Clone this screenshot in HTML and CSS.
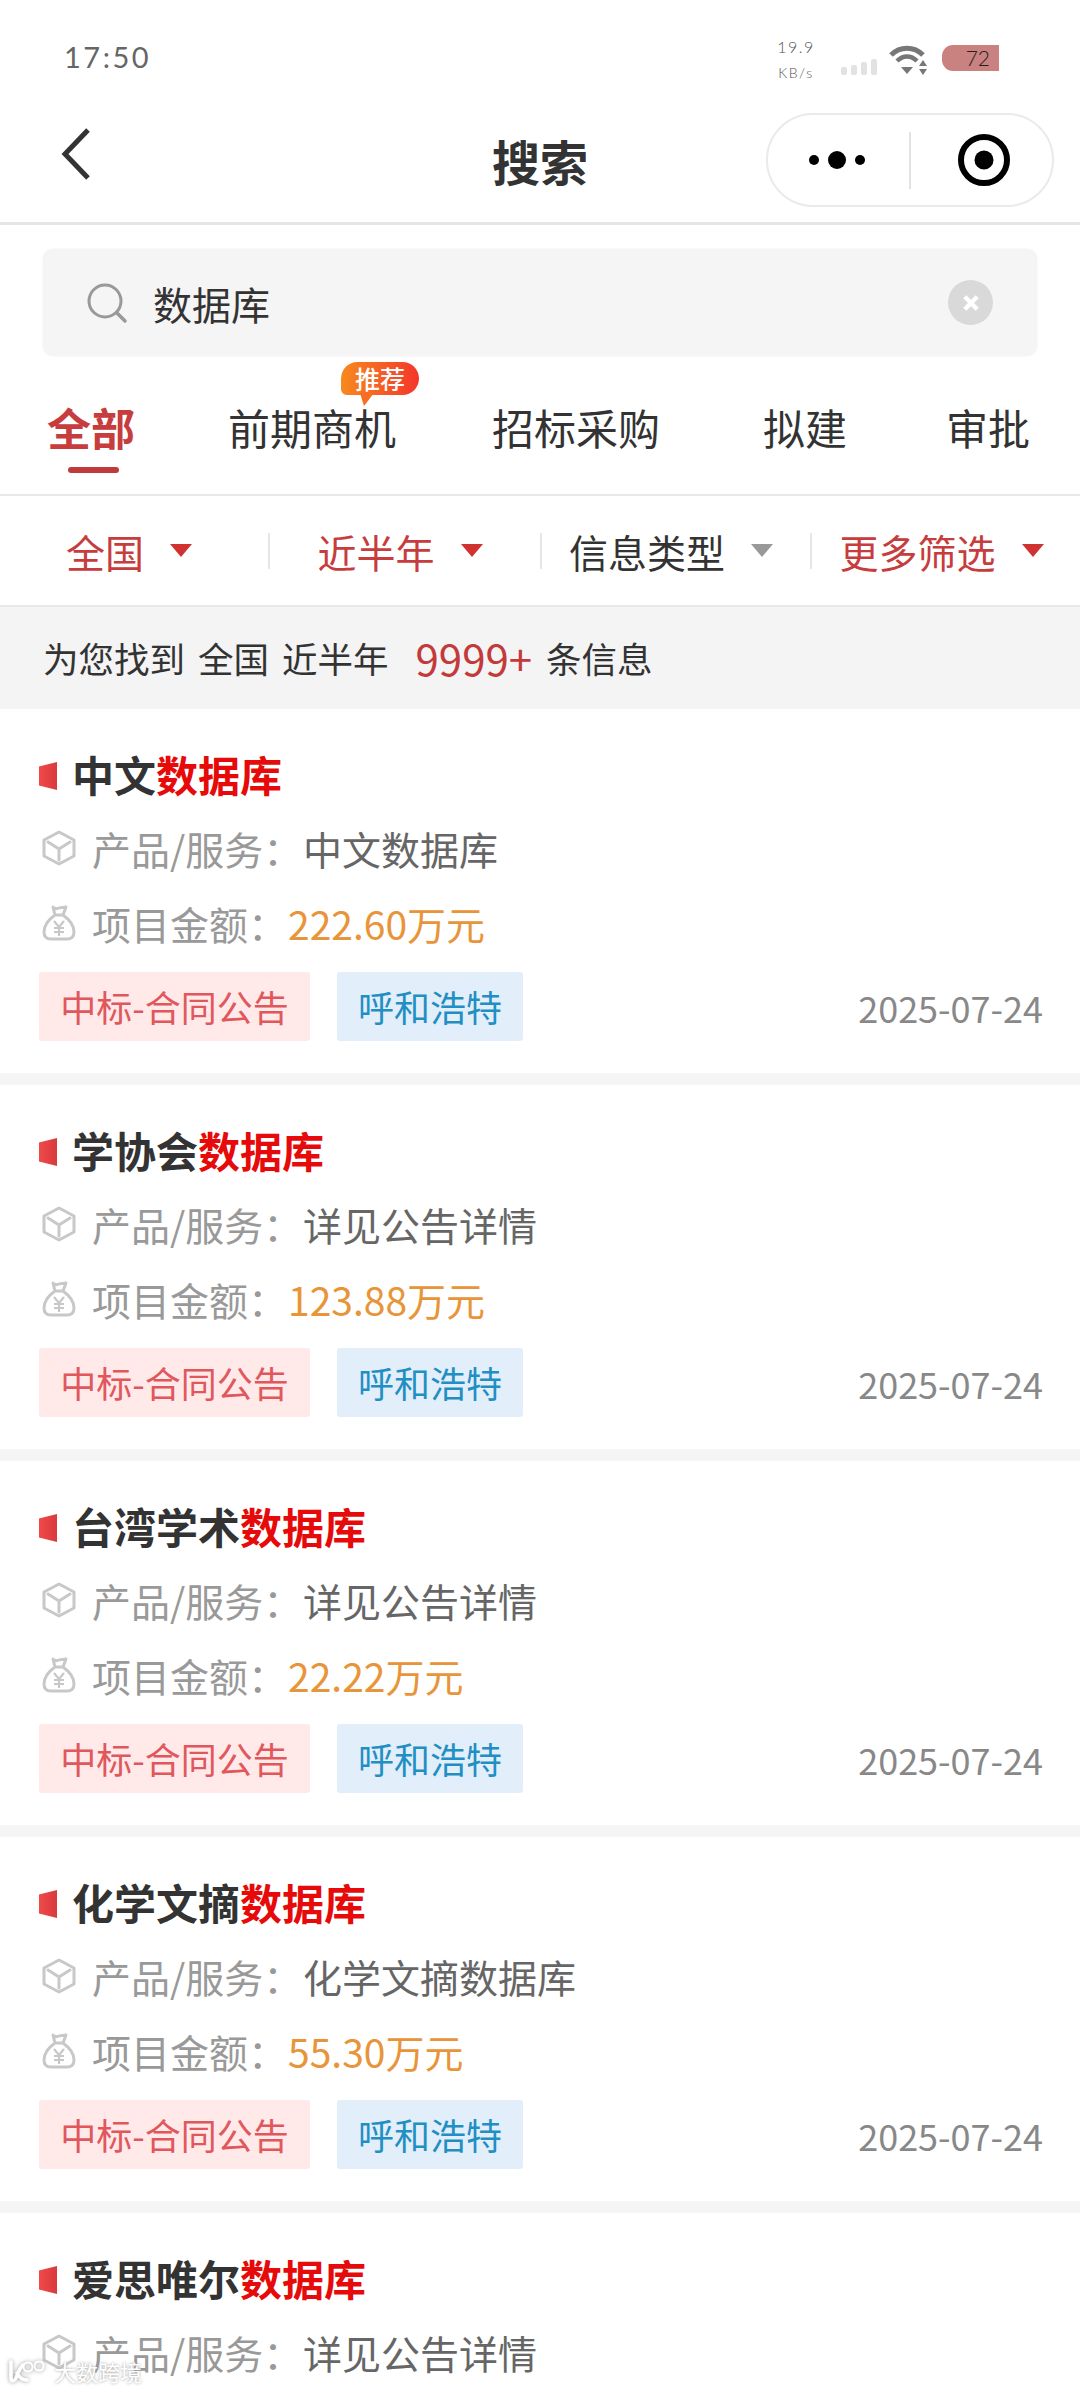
FILE: index.html
```html
<!DOCTYPE html>
<html lang="zh-CN">
<head>
<meta charset="utf-8">
<title>搜索</title>
<link rel="stylesheet" href="styles.css">
</head>
<body>
<div class="page">
  <header class="status">
    <span class="time">17:50</span>
    <div class="status-right">
      <div class="speed"><span>19.9</span><span class="unit">KB/s</span></div>
      <svg class="signal" width="36" height="18" viewBox="0 0 36 18"><rect x="0" y="9" width="6" height="8" rx="2"/><rect x="10" y="7" width="6" height="10" rx="2"/><rect x="20" y="4" width="6" height="13" rx="2"/><rect x="30" y="1" width="6" height="16" rx="2"/></svg>
      <svg class="wifi" width="38" height="30" viewBox="0 0 38 30"><path d="M2 10C11 1 25 1 34 10" fill="none" stroke="#777" stroke-width="5"/><path d="M8 16C14 10 22 10 28 16" fill="none" stroke="#777" stroke-width="4.5"/><path d="M12 22L24 22L18 29Z" fill="#777"/><path d="M34 15L38 21L30 21Z" fill="#777"/><path d="M30 24L38 24L34 30Z" fill="#777"/></svg>
      <div class="battery">72</div>
    </div>
  </header>

  <nav class="nav">
    <svg class="back" width="30" height="52" viewBox="0 0 30 52"><path d="M27 2L4 26L27 50" fill="none" stroke="#333" stroke-width="5"/></svg>
    <h1 class="nav-title">搜索</h1>
    <div class="capsule">
      <svg class="capsule-dots" width="60" height="20" viewBox="0 0 60 20"><circle cx="5" cy="10" r="5"/><circle cx="28" cy="10" r="9"/><circle cx="51" cy="10" r="5"/></svg>
      <i class="capsule-line"></i>
      <svg class="capsule-target" width="54" height="54" viewBox="0 0 54 54"><circle cx="27" cy="27" r="23" fill="none" stroke="#000" stroke-width="6"/><circle cx="27" cy="27" r="9.5" fill="#000"/></svg>
    </div>
  </nav>

  <section class="search-wrap">
    <div class="search">
      <svg width="42" height="42" viewBox="0 0 42 42"><circle cx="19" cy="19" r="16" fill="none" stroke="#999" stroke-width="3"/><path d="M31 31L39 39" stroke="#999" stroke-width="3.5" stroke-linecap="round"/></svg>
      <span class="search-text">数据库</span>
      <span class="search-clear"><svg width="20" height="20" viewBox="0 0 16 16"><path d="M3 3L13 13M13 3L3 13" stroke="#fff" stroke-width="3.5"/></svg></span>
    </div>
  </section>

  <div class="tabs">
    <div class="tab tab-active">全部<i class="tab-line"></i></div>
    <div class="tab tab-b">前期商机
      <span class="badge">推荐</span>
    </div>
    <div class="tab tab-c">招标采购</div>
    <div class="tab tab-d">拟建</div>
    <div class="tab tab-e">审批</div>
  </div>

  <div class="filters">
    <div class="filter red"><span>全国</span><i class="arrow"></i></div>
    <div class="filter red"><span>近半年</span><i class="arrow"></i></div>
    <div class="filter"><span>信息类型</span><i class="arrow"></i></div>
    <div class="filter red last"><span>更多筛选</span><i class="arrow"></i></div>
  </div>

  <div class="count">
    <span>为您找到</span><span class="count-s1">全国</span><span class="count-s2">近半年</span><span class="count-num">9999+</span><span class="count-s3">条信息</span>
  </div>

  <svg width="0" height="0" class="defs">
    <defs>
      <symbol id="cube" viewBox="0 0 34 36"><path d="M17 2L32 10V26L17 34L2 26V10Z M6 12L17 19L28 12 M17 19V30" fill="none" stroke="#c8c8c8" stroke-width="3" stroke-linejoin="round" stroke-linecap="round"/></symbol>
      <symbol id="bag" viewBox="0 0 34 36"><path d="M11 2C13 4 15 4 17 3C19 2 21 3 24 2L21 10H13Z M13 10C6 15 2 21 2 27C2 32 5 34 9 34H25C29 34 32 32 32 27C32 21 28 15 21 10" fill="none" stroke="#c8c8c8" stroke-width="3" stroke-linejoin="round" stroke-linecap="round"/><path d="M12 16L17 22L22 16 M17 22V31 M12 23H22 M12 27H22" fill="none" stroke="#c8c8c8" stroke-width="2.2"/></symbol>
    </defs>
  </svg>

  <main class="list">
    <article class="card">
      <h2 class="card-title"><i class="mark"></i>中文<em>数据库</em></h2>
      <div class="row"><svg class="row-icon"><use href="#cube"/></svg><span class="label">产品/服务：</span><span class="value">中文数据库</span></div>
      <div class="row"><svg class="row-icon"><use href="#bag"/></svg><span class="label">项目金额：</span><span class="money">222.60万元</span></div>
      <div class="card-foot"><span class="tag tag-red">中标-合同公告</span><span class="tag tag-blue">呼和浩特</span><span class="date">2025-07-24</span></div>
    </article>
    <article class="card">
      <h2 class="card-title"><i class="mark"></i>学协会<em>数据库</em></h2>
      <div class="row"><svg class="row-icon"><use href="#cube"/></svg><span class="label">产品/服务：</span><span class="value">详见公告详情</span></div>
      <div class="row"><svg class="row-icon"><use href="#bag"/></svg><span class="label">项目金额：</span><span class="money">123.88万元</span></div>
      <div class="card-foot"><span class="tag tag-red">中标-合同公告</span><span class="tag tag-blue">呼和浩特</span><span class="date">2025-07-24</span></div>
    </article>
    <article class="card">
      <h2 class="card-title"><i class="mark"></i>台湾学术<em>数据库</em></h2>
      <div class="row"><svg class="row-icon"><use href="#cube"/></svg><span class="label">产品/服务：</span><span class="value">详见公告详情</span></div>
      <div class="row"><svg class="row-icon"><use href="#bag"/></svg><span class="label">项目金额：</span><span class="money">22.22万元</span></div>
      <div class="card-foot"><span class="tag tag-red">中标-合同公告</span><span class="tag tag-blue">呼和浩特</span><span class="date">2025-07-24</span></div>
    </article>
    <article class="card">
      <h2 class="card-title"><i class="mark"></i>化学文摘<em>数据库</em></h2>
      <div class="row"><svg class="row-icon"><use href="#cube"/></svg><span class="label">产品/服务：</span><span class="value">化学文摘数据库</span></div>
      <div class="row"><svg class="row-icon"><use href="#bag"/></svg><span class="label">项目金额：</span><span class="money">55.30万元</span></div>
      <div class="card-foot"><span class="tag tag-red">中标-合同公告</span><span class="tag tag-blue">呼和浩特</span><span class="date">2025-07-24</span></div>
    </article>
    <article class="card">
      <h2 class="card-title"><i class="mark"></i>爱思唯尔<em>数据库</em></h2>
      <div class="row"><svg class="row-icon"><use href="#cube"/></svg><span class="label">产品/服务：</span><span class="value">详见公告详情</span></div>
    </article>
  </main>

  <div class="watermark">
    <svg width="40" height="24" viewBox="0 0 40 24"><path d="M3 3V20C3 23 7 22 8 19C10 13 12 9 15 6M9 14C11 18 14 21 19 21" fill="none" stroke="#fff" stroke-width="3.5" stroke-linecap="round"/><circle cx="20" cy="8" r="4.5" fill="none" stroke="#fff" stroke-width="2"/><circle cx="31" cy="7" r="4.5" fill="none" stroke="#fff" stroke-width="2"/></svg>
    <span>大数跨境</span>
  </div>
</div>
</body>
</html>
```

FILE: styles.css
```css
* { box-sizing: border-box; }
html, body { margin: 0; padding: 0; background: #fff; }
.page {
  position: relative;
  width: 1080px;
  height: 2388px;
  overflow: hidden;
  font-family: "Noto Sans CJK SC", "Noto Sans", sans-serif;
  color: #333;
  background: #fff;
}
i, em { font-style: normal; }
.defs { position: absolute; }

/* status bar */
.status {
  height: 100px;
  display: flex;
  align-items: flex-start;
  justify-content: space-between;
  padding: 40px 81px 0 64px;
}
.time { font-family: "Lato", sans-serif; font-size: 29px; line-height: 34px; letter-spacing: 2.5px; color: #666; }
.status-right { display: flex; align-items: flex-start; }
.speed { display: flex; flex-direction: column; align-items: center; width: 38px; margin-left: 3px; font-family: "Lato", sans-serif; font-weight: 300; color: #555; font-size: 16px; line-height: 15px; margin-top: -1px; letter-spacing: 1.5px; }
.speed .unit { margin-top: 11px; font-size: 14px; }
.signal { margin: 18px 0 0 26px; fill: #e2e2e2; }
.wifi { margin: 5px 0 0 12px; }
.battery {
  width: 57px; height: 26px; margin: 5px 0 0 15px;
  background: #c9827f; border-radius: 11px 0 0 11px;
  font-family: "Lato", sans-serif; font-weight: 300; font-size: 21px; line-height: 26px; color: #222;
  text-align: right; padding-right: 9px;
}

/* nav */
.nav { position: relative; height: 125px; border-bottom: 3px solid #e5e5e5; display: flex; align-items: center; justify-content: center; }
.back { position: absolute; left: 61px; top: 28px; }
.nav-title { margin: 0; font-size: 48px; font-weight: 700; line-height: 60px; color: #333; margin-top: -2px; }
.capsule {
  position: absolute; left: 766px; top: 13px; width: 288px; height: 94px;
  border: 2px solid #eaeaea; border-radius: 47px;
  display: flex; align-items: center;
}
.capsule-dots { margin-left: 41px; }
.capsule-line { width: 2px; height: 57px; background: #e3e3e3; margin-left: 40px; }
.capsule-target { margin-left: 46px; }

/* search */
.search-wrap { padding: 24px 43px 0; }
.search {
  height: 107px; background: #f5f5f5; border-radius: 10px;
  display: flex; align-items: center; padding: 0 44px 0 43px;
  box-shadow: 0 0 2px #ececec;
}
.search-text { margin-left: 25px; font-size: 39px; color: #333; flex: 1; line-height: 50px; }
.search-clear { width: 45px; height: 45px; border-radius: 50%; background: #d9d9d9; display: flex; align-items: center; justify-content: center; }

/* tabs */
.tabs { height: 140px; display: flex; padding: 41px 0 0 47px; border-bottom: 2px solid #e8e8e8; }
.tab { position: relative; font-size: 42px; line-height: 60px; color: #333; white-space: nowrap; }
.tab-active { font-size: 44px; font-weight: 700; color: #c73c3c; }
.tab-line { position: absolute; left: 21px; top: 70px; width: 51px; height: 6px; border-radius: 3px; background: #c0393b; }
.tab-b { margin-left: 93px; }
.tab-c { margin-left: 96px; }
.tab-d { margin-left: 103px; }
.tab-e { margin-left: 99px; }
.badge {
  position: absolute; left: 113px; top: -35px; width: 78px; height: 33px;
  border-radius: 17px 17px 17px 6px;
  background: linear-gradient(90deg, #f78a1d, #f5352b);
  color: #fff; font-size: 25px; font-weight: 500; line-height: 33px; text-align: center;
}
.badge::after {
  content: ""; position: absolute; left: 19px; top: 31px;
  border-top: 13px solid #f76e22; border-right: 10px solid transparent; border-left: 4px solid transparent;
}

/* filters */
.filters { height: 111px; display: grid; grid-template-columns: 270px 272px 270px 268px; align-items: center; border-bottom: 2px solid #e8e8e8; }
.filter { height: 36px; display: flex; align-items: center; justify-content: center; padding-right: 10px; border-right: 2px solid #e6e6e6; font-size: 39px; line-height: 36px; color: #333; }
.filter.last { border-right: 0; padding-right: 9px; }
.filter.red { color: #c73c3c; }
.arrow { margin-left: 26px; border-top: 13px solid #999; border-left: 11px solid transparent; border-right: 11px solid transparent; }
.red .arrow { border-top-color: #d03232; }

/* count */
.count { height: 102px; background: #f4f4f4; display: flex; align-items: center; padding-left: 43px; font-size: 35.5px; color: #333; line-height: 50px; }
.count-s1 { margin-left: 13px; }
.count-s2 { margin-left: 13px; }
.count-num { margin-left: 27px; margin-right: 14px; font-size: 42px; color: #c33a3a; }

/* list */
.list { background: #f5f5f5; display: flex; flex-direction: column; gap: 12px; }
.card { height: 364px; background: #fff; padding: 38px 37px 0 39px; flex: none; }
.card-title { margin: 0; display: flex; align-items: center; font-size: 42px; font-weight: 700; line-height: 54px; color: #333; }
.card-title em { color: #e60a0a; }
.mark { width: 18px; height: 28px; margin: 4px 15px 0 0; background: linear-gradient(90deg, #f0494a, #d93a3a); clip-path: polygon(0 16%, 100% 0, 100% 100%, 0 84%); }
.row { margin-top: 22px; height: 50px; display: flex; align-items: center; font-size: 39px; line-height: 50px; }
.row + .row { margin-top: 25px; }
.row-icon { width: 34px; height: 36px; margin: 0 16px 0 3px; flex: none; }
.label { color: #999; width: 211px; flex: none; white-space: nowrap; }
.value { color: #666; }
.money { color: #e8953a; margin-left: -15px; }
.card-foot { margin-top: 24px; display: flex; align-items: center; }
.tag { height: 69px; border-radius: 3px; font-size: 36px; line-height: 69px; white-space: nowrap; }
.tag-red { width: 271px; text-align: center; background: #ffe9e9; color: #e0575c; }
.tag-blue { width: 186px; margin-left: 27px; text-align: center; background: #e2eef9; color: #1f8fc4; }
.date { margin-left: auto; font-size: 36px; line-height: 50px; color: #888; padding-top: 1px; }

/* watermark */
.watermark { position: absolute; left: 8px; top: 2358px; display: flex; align-items: center; gap: 6px; color: #fff; font-size: 22px; line-height: 26px; text-shadow: 0 0 3px #999; }
.watermark svg { filter: drop-shadow(0 0 2px #999); }
```
